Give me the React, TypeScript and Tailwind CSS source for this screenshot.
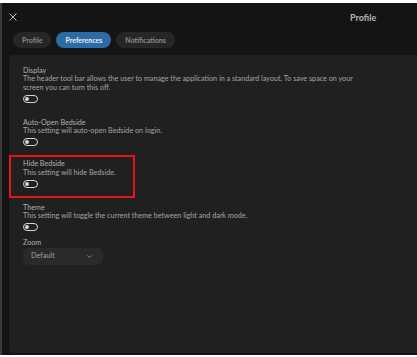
import { ChevronDown } from 'lucide-react'

const settings = [
  { id: 'display', label: 'Display', desc: 'The header tool bar allows the user to manage the application in a standard layout. To save space on your screen you can turn this off.', cls: 'pl-[14px] mb-[16px]' },
  { id: 'auto', label: 'Auto-Open Bedside', desc: 'This setting will auto-open Bedside on login.', cls: 'pl-[14px] mb-[9px]' },
  { id: 'hide', label: 'Hide Bedside', desc: 'This setting will hide Bedside.', cls: 'border-2 border-[#e5141a] w-[126px] pl-[12px] pt-[3px] pb-[8px] mb-[6px]' },
  { id: 'theme', label: 'Theme', desc: 'This setting will toggle the current theme between light and dark mode.', cls: 'pl-[14px] mb-[8px]' },
]

function Toggle() {
  return (
    <div className="w-[15px] h-[8px] rounded-full border-[1.5px] border-[#d4d4d4] flex items-center pl-[1px] mt-[2.5px]">
      <div className="w-[4px] h-[4px] rounded-full bg-[#d4d4d4]" />
    </div>
  )
}

export default function App() {
  const tabs = ['Profile', 'Preferences', 'Notifications']
  return (
    <div className="w-[417px] h-[357px] bg-white pt-[3px] pb-[2px] font-['Lato',sans-serif]">
      <div className="h-full bg-[#3c3c3c] pl-[2px]">
        <div className="h-full bg-[#141414] flex flex-col pl-[7px] pb-[2px]">
          <div className="flex items-start h-[29px] relative">
            <svg width="8" height="8" viewBox="0 0 8 8" className="mt-[10px]">
              <path d="M0.5 0.5 L7.5 7.5 M7.5 0.5 L0.5 7.5" stroke="#bdbdbd" strokeWidth="1" />
            </svg>
            <div className="absolute left-[341px] top-[8px] text-[9px] font-bold text-[#b5b5b5]">Profile</div>
          </div>
          <div className="flex gap-[5px] pl-[4px] h-[16px] text-[7px] font-bold">
            {tabs.map(t => (
              <div key={t} className={`rounded-full flex items-center px-[9px] ${t === 'Preferences' ? 'bg-[#2c6ca6] text-[#e8eef5]' : 'bg-[#262626] text-[#8a8a8a]'}`}>{t}</div>
            ))}
          </div>
          <div className="mt-[7px] flex-1 bg-[#202020] rounded-l-[4px] pt-[11.5px] text-[7.2px] leading-[8.5px]">
            {settings.map(s => (
              <div key={s.id} className={s.cls}>
                <div className="text-[#b0b0b0]">{s.label}</div>
                <div className="text-[#a4a4a4] w-[338px]">{s.desc}</div>
                <Toggle />
              </div>
            ))}
            <div className="pl-[14px]">
              <div className="text-[#b0b0b0]">Zoom</div>
              <div className="w-[80px] h-[17px] rounded-[6px] bg-[#2a2a2a] flex items-center justify-between pl-[8px] pr-[10px] text-[#a0a0a0]">
                <span>Default</span>
                <ChevronDown size={7} strokeWidth={2} className="text-[#bdbdbd]" />
              </div>
            </div>
          </div>
        </div>
      </div>
    </div>
  )
}
